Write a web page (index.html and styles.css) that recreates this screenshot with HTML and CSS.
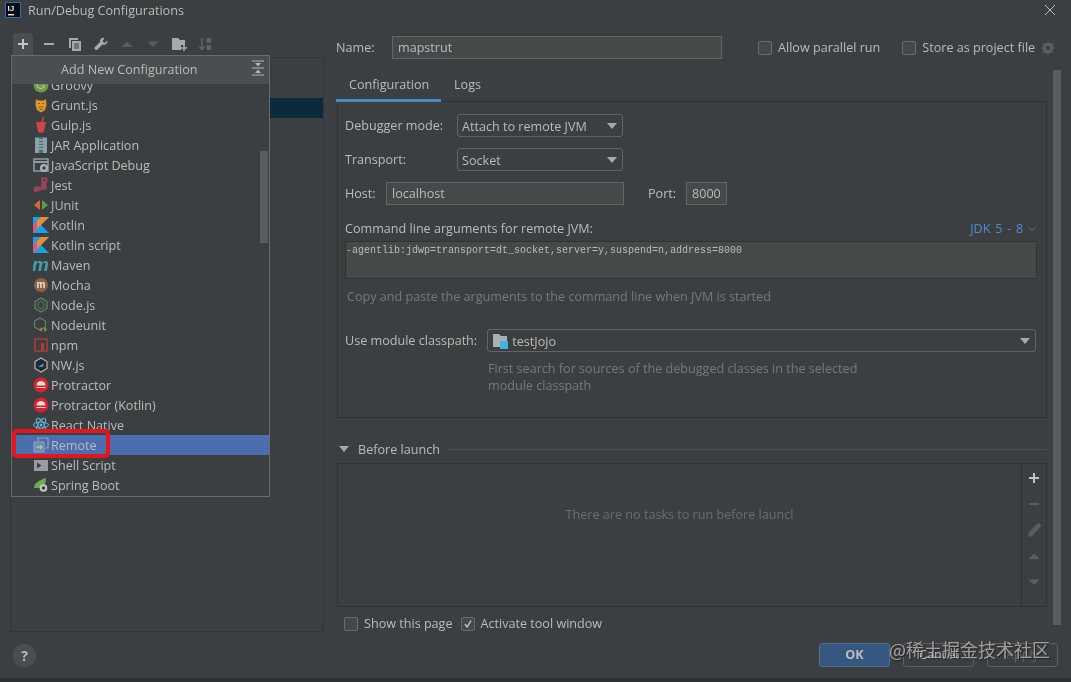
FILE: index.html
```html
<!DOCTYPE html>
<html lang="en">
<head>
    <meta charset="UTF-8">
    <title>Run/Debug Configurations</title>
    <link rel="stylesheet" href="styles.css">
</head>
<body>
<div class="dialog">
    <!-- title bar -->
    <div class="titlebar">
        <svg class="app_icon" viewBox="0 0 16 16"><rect x="0.5" y="0.5" width="15" height="15" fill="#0b0d12" stroke="#2f6fb0"/><text x="2.5" y="8.5" class="app_icon_text">IJ</text><rect x="3" y="12" width="6" height="1.4" fill="#e8e8e8"/></svg>
        <span class="title_text">Run/Debug Configurations</span>
        <svg class="close_icon" viewBox="0 0 10 10"><path d="M0 0L10 10M10 0L0 10" stroke="#bbb" fill="none"/></svg>
    </div>

    <div class="main">
        <!-- left side -->
        <div class="left">
            <div class="toolbar">
                <span class="tool tool_on"><svg viewBox="0 0 16 16"><path d="M8 3V13M3 8H13" stroke="#c4c4c4" stroke-width="2"/></svg></span>
                <span class="tool"><svg viewBox="0 0 16 16"><path d="M3 8H13" stroke="#a9a9a9" stroke-width="2"/></svg></span>
                <span class="tool"><svg viewBox="0 0 16 16"><path d="M2 2H11V4H4V12H2Z" fill="#a9a9a9"/><path d="M5 5H14V15H5Z" fill="#a9a9a9"/><path d="M7 8H12M7 10H12M7 12H12" stroke="#3c3f41"/></svg></span>
                <span class="tool"><svg viewBox="0 0 16 16"><path d="M14.5 4.5L11.5 7 9.5 5.5 11.5 2C9 1 6.5 3 7 6L1.5 11.5C1 13 2.5 14.5 4 14L9.500 8.500C12 9.500 15 7.500 14.500 4.500Z" fill="#a9a9a9"/></svg></span>
                <span class="tool"><svg viewBox="0 0 16 16"><path d="M2.500 11L8 5.500 13.500 11Z" fill="#5a5d5f"/></svg></span>
                <span class="tool"><svg viewBox="0 0 16 16"><path d="M2.500 5.500L8 11 13.500 5.500Z" fill="#5a5d5f"/></svg></span>
                <span class="tool"><svg viewBox="0 0 16 16"><path d="M1 2H7L9 4H14V9H10V14H1Z" fill="#a9a9a9"/><path d="M13 9V15M10 12H16" stroke="#a9a9a9" stroke-width="1.600"/></svg></span>
                <span class="tool"><svg viewBox="0 0 16 16"><path d="M5 2V13M2.500 10.500L5 13.500 7.500 10.500" stroke="#5f6264" stroke-width="1.500" fill="none"/><path d="M9.500 2H14V7H9.500ZM9.500 9H14V14H9.500Z" fill="#5f6264"/></svg></span>
            </div>
            <div class="tree_panel">
                <div class="tree_selected"></div>
            </div>

            <!-- add configuration popup -->
            <div class="popup">
                <div class="popup_head">
                    <span>Add New Configuration</span>
                    <svg class="collapse_icon" viewBox="0 0 12 16"><path d="M0 1H12M0 15H12M0 8H12" stroke="#b5b5b5"/><path d="M3 3H9L6 6.500ZM3 13H9L6 9.500Z" fill="#b5b5b5"/></svg>
                </div>
                <ul class="popup_list">
                    <li><svg viewBox="0 0 16 16"><circle cx="8" cy="8" r="7.500" fill="#6f9a45"/><path d="M11 5.500A3.800 3.800 0 1 0 11.500 9H8.500" fill="none" stroke="#a9c78c" stroke-width="1.200"/></svg>Groovy</li>
                    <li><svg viewBox="0 0 16 16"><path d="M3 2L5 3.500H11L13 2 13.500 8 12 13 8 15.500 4 13 2.500 8Z" fill="#dd9a2b"/><path d="M5 6.500H7M9 6.500H11M5.500 10H10.500M6.500 12.500H9.500" stroke="#8a5a1c" stroke-width="1.200"/></svg>Grunt.js</li>
                    <li><svg viewBox="0 0 16 16"><path d="M3 5H13L11.500 12 10.500 15.500H5.500L4.500 12Z" fill="#cf4646"/><path d="M9 5L10.500 0" stroke="#cf4646" stroke-width="1.500"/></svg>Gulp.js</li>
                    <li><svg viewBox="0 0 16 16"><rect x="2" y="0.500" width="12" height="15.500" fill="#8aa3ab"/><rect x="6" y="0.500" width="4" height="15.500" fill="#4d6e77"/><path d="M6 3H10M6 6H10M6 9H10M6 12H10" stroke="#b8cdd3"/></svg>JAR Application</li>
                    <li><svg viewBox="0 0 16 16"><path d="M1 2H15V14H1Z" fill="none" stroke="#8a9da5" stroke-width="1.500"/><path d="M1 5H15" stroke="#8a9da5" stroke-width="2"/><circle cx="11" cy="11" r="4" fill="#aab4b9"/><circle cx="11" cy="11" r="1.800" fill="#3c3f41"/></svg>JavaScript Debug</li>
                    <li><svg viewBox="0 0 16 16"><path d="M8 0.500H14.500V5.500L13 5.500 14 12 7 13.500 1 15.500 0.500 10.500 5 9 7.500 10.500 8.500 5.500Z" fill="#99425b"/><path d="M10.500 2H12.500V4H10.500Z" fill="#3c3f41"/></svg>Jest</li>
                    <li><svg viewBox="0 0 16 16"><path d="M7 3V13L1 8Z" fill="#d9682f"/><path d="M9 3V13L15 8Z" fill="#5f9e43"/></svg>JUnit</li>
                    <li><svg viewBox="0 0 16 16"><path d="M0 0H16L8 8 16 16H0Z" fill="#19a0e6"/><path d="M8 0H16L0 16V8Z" fill="#ef8a34"/><path d="M0 8L4 4V12L0 16Z" fill="#d4558f"/></svg>Kotlin</li>
                    <li><svg viewBox="0 0 16 16"><path d="M0 0H16L8 8 16 16H0Z" fill="#19a0e6"/><path d="M8 0H16L0 16V8Z" fill="#ef8a34"/><path d="M0 8L4 4V12L0 16Z" fill="#d4558f"/></svg>Kotlin script</li>
                    <li><svg viewBox="0 0 16 16"><text x="-1" y="14" class="maven_m">m</text></svg>Maven</li>
                    <li><svg viewBox="0 0 16 16"><circle cx="8" cy="8" r="7" fill="#8a6244"/><text x="8" y="11" class="mocha_m">m</text></svg>Mocha</li>
                    <li><svg viewBox="0 0 16 16"><path d="M8 1L14 4.500V11.500L8 15 2 11.500V4.500Z" fill="none" stroke="#5b8a5b" stroke-width="1.200"/><path d="M8 4L11 6V10L8 12 5 10V6Z" fill="none" stroke="#5b8a5b" stroke-width="0.800"/></svg>Node.js</li>
                    <li><svg viewBox="0 0 16 16"><path d="M7 1L12.500 4V10L7 13 1.500 10V4Z" fill="none" stroke="#5b8a5b" stroke-width="1.200"/><path d="M9 10V15L6 12.500Z" fill="#d9682f"/><path d="M11 10V15L14.500 12.500Z" fill="#5f9e43"/></svg>Nodeunit</li>
                    <li><svg viewBox="0 0 16 16"><path d="M2 2H14V14H2Z" fill="none" stroke="#b03a3a" stroke-width="1.600"/><path d="M8 6H11V14H8Z" fill="#b03a3a"/></svg>npm</li>
                    <li><svg viewBox="0 0 16 16"><path d="M8 1L14 4.500V11.500L8 15 2 11.500V4.500Z" fill="#23282c" stroke="#b5b8ba" stroke-width="1.200"/><path d="M5 10L11 6 10 10Z" fill="#4a8fd0"/></svg>NW.js</li>
                    <li><svg viewBox="0 0 16 16"><circle cx="8" cy="8" r="7.500" fill="#d3232f"/><path d="M3.500 8.500A4.500 4.500 0 0 1 12.500 8.500Z" fill="#f4d9da"/><path d="M3.500 10.500H12.500" stroke="#f4d9da"/></svg>Protractor</li>
                    <li><svg viewBox="0 0 16 16"><circle cx="8" cy="8" r="7.500" fill="#d3232f"/><path d="M3.500 8.500A4.500 4.500 0 0 1 12.500 8.500Z" fill="#f4d9da"/><path d="M3.500 10.500H12.500" stroke="#f4d9da"/></svg>Protractor (Kotlin)</li>
                    <li><svg viewBox="0 0 16 16"><g fill="none" stroke="#5fb4d6"><ellipse cx="8" cy="8" rx="7.500" ry="3"/><ellipse cx="8" cy="8" rx="7.500" ry="3" transform="rotate(60 8 8)"/><ellipse cx="8" cy="8" rx="7.500" ry="3" transform="rotate(120 8 8)"/></g><circle cx="8" cy="8" r="1.500" fill="#5fb4d6"/></svg>React Native</li>
                    <li class="active"><svg viewBox="0 0 16 16"><path d="M5 4V1H15V11H12" fill="none" stroke="#8fa6bd" stroke-width="1.200"/><path d="M1 5H11V15H1Z" fill="#6f8cae" stroke="#8fa6bd"/><path d="M3 10H9M7 8L9 10 7 12" stroke="#c6d2de" fill="none"/></svg>Remote</li>
                    <li><svg viewBox="0 0 16 16"><rect x="1" y="3" width="14" height="11" fill="#9a9d9f"/><path d="M4 5.500L8.500 8.500 4 11.500Z" fill="#3c3f41"/></svg>Shell Script</li>
                    <li><svg viewBox="0 0 16 16"><path d="M1 11C1 6 6 3 13 1 13 6 11 10 7 11Z" fill="#6cab4a"/><circle cx="10.500" cy="11" r="3.800" fill="#c8c8c8"/><circle cx="10.500" cy="11" r="1.800" fill="#3c3f41"/></svg>Spring Boot</li>
                </ul>
                <div class="popup_thumb"></div>
                <div class="red_box"></div>
            </div>
        </div>

        <!-- right side -->
        <div class="right">
            <div class="name_row">
                <label class="name_label">Name:</label>
                <div class="input name_input">mapstrut</div>
                <span class="check check_parallel"><i class="box"></i>Allow parallel run</span>
                <span class="check check_store"><i class="box"></i>Store as project file</span>
                <svg class="gear_icon" viewBox="0 0 16 16"><path d="M6.500 1H9.500L10 3 12 2 14 4 13 6 15 6.500V9.500L13 10 14 12 12 14 10 13 9.500 15H6.500L6 13 4 14 2 12 3 10 1 9.500V6.500L3 6 2 4 4 2 6 3Z" fill="#5a5d5f"/><circle cx="8" cy="8" r="2.200" fill="#3c3f41"/></svg>
            </div>

            <div class="scroll_row">
                <div class="content">
                    <div class="tabs">
                        <span class="tab tab_on">Configuration</span>
                        <span class="tab">Logs</span>
                    </div>
                    <div class="panel">
                        <div class="form_row">
                            <label class="form_label">Debugger mode:</label>
                            <div class="select select_short">Attach to remote JVM<i class="arrow"></i></div>
                        </div>
                        <div class="form_row">
                            <label class="form_label">Transport:</label>
                            <div class="select select_short">Socket<i class="arrow"></i></div>
                        </div>
                        <div class="form_row">
                            <label class="host_label">Host:</label>
                            <div class="input host_input">localhost</div>
                            <label class="port_label">Port:</label>
                            <div class="input port_input">8000</div>
                        </div>
                        <div class="cmd_head">
                            <span>Command line arguments for remote JVM:</span>
                            <span class="jdk">JDK 5 - 8 <svg viewBox="0 0 8 6"><path d="M0.500 1L4 4.500 7.500 1" fill="none" stroke="#777"/></svg></span>
                        </div>
                        <div class="cmd_box">-agentlib:jdwp=transport=dt_socket,server=y,suspend=n,address=8000</div>
                        <p class="hint hint_copy">Copy and paste the arguments to the command line when JVM is started</p>
                        <div class="module_row">
                            <label class="module_label">Use module classpath:</label>
                            <div class="select select_module">
                                <svg class="module_icon" viewBox="0 0 16 16"><path d="M0 1H6L8 3H14V14H0Z" fill="#a9b0b5"/><rect x="7" y="8" width="8" height="8" fill="#3fb4dc"/></svg>
                                testJojo<i class="arrow"></i>
                            </div>
                        </div>
                        <p class="hint hint_module">First search for sources of the debugged classes in the selected<br>module classpath</p>
                    </div>

                    <div class="before_head">
                        <i class="before_arrow"></i>
                        <span>Before launch</span>
                        <i class="before_line"></i>
                    </div>
                    <div class="before_box">
                        <div class="before_empty">There are no tasks to run before launcl</div>
                        <div class="before_tools">
                            <svg viewBox="0 0 16 16"><path d="M8 3V13M3 8H13" stroke="#c4c4c4" stroke-width="2"/></svg>
                            <svg viewBox="0 0 16 16"><path d="M3 8H13" stroke="#5a5d5f" stroke-width="2"/></svg>
                            <svg viewBox="0 0 16 16"><path d="M3 15L2 14 3 10 11 2 14 1 15 4 13.500 6 6 14Z" fill="#5a5d5f"/></svg>
                            <svg viewBox="0 0 16 16"><path d="M2.500 11L8 5.500 13.500 11Z" fill="#5a5d5f"/></svg>
                            <svg viewBox="0 0 16 16"><path d="M2.500 5.500L8 11 13.500 5.500Z" fill="#5a5d5f"/></svg>
                        </div>
                    </div>
                    <div class="launch_checks">
                        <span class="check"><i class="box"></i>Show this page</span>
                        <span class="check"><i class="box box_on"><svg viewBox="0 0 14 14"><path d="M3.500 7L6 10.500 10.500 3" fill="none" stroke="#c4c4c4" stroke-width="1.600"/></svg></i>Activate tool window</span>
                    </div>
                </div>
                <div class="scrollbar"></div>
            </div>
        </div>
    </div>

    <!-- bottom buttons -->
    <div class="footer">
        <span class="help">?</span>
        <div class="buttons">
            <span class="btn btn_ok">OK</span>
            <span class="btn">Cancel</span>
            <span class="btn btn_off">Apply</span>
        </div>
        <span class="watermark">@稀土掘金技术社区</span>
    </div>
</div>
</body>
</html>
```

FILE: styles.css
```css
*{
    margin: 0;
    padding: 0;
    box-sizing: border-box;
}
li{
    list-style: none;
}
i{
    font-style: normal;
}
body{
    width: 1071px;
    height: 682px;
    overflow: hidden;
    background: #2f3133;
    color: #bbbbbb;
    font-family: "Open Sans", "Noto Sans", sans-serif;
    font-size: 12.6px;
}
.dialog{
    width: 1071px;
    height: 678px;
    background: #3c3f41;
    position: relative;
    filter: blur(0.35px);
}

/* title bar */
.titlebar{
    height: 20px;
    display: flex;
    align-items: center;
    padding-left: 5px;
}
.app_icon{
    width: 16px;
    height: 16px;
    flex: none;
}
.app_icon_text{
    font-family: "Liberation Sans", sans-serif;
    font-size: 8px;
    font-weight: bold;
    fill: #e8e8e8;
}
.title_text{
    margin-left: 7px;
}
.close_icon{
    width: 10px;
    height: 10px;
    margin-left: auto;
    margin-right: 16px;
}

.main{
    height: 623px;
    display: flex;
}

/* left side */
.left{
    width: 314px;
    margin-left: 10px;
    position: relative;
    flex: none;
}
.toolbar{
    margin-top: 13px;
    height: 24px;
    padding-left: 3px;
    display: flex;
}
.tool{
    width: 20px;
    height: 22px;
    margin-right: 6px;
    display: flex;
    align-items: center;
    justify-content: center;
}
.tool svg{
    width: 16px;
    height: 16px;
}
.tool_on{
    background: #4b4e50;
    border-radius: 3px 3px 0 0;
}
.tree_panel{
    height: 575px;
    border: 1px solid #333537;
    padding-top: 40px;
}
.tree_selected{
    height: 20px;
    background: #0d293e;
}

/* popup */
.popup{
    position: absolute;
    left: 1px;
    top: 35px;
    width: 259px;
    height: 442px;
    background: #3c3f41;
    border: 1px solid #696c6e;
    overflow: hidden;
}
.popup_head{
    position: relative;
    z-index: 1;
    height: 28px;
    background: #4b4e50;
    display: flex;
    align-items: center;
    padding-left: 49px;
    padding-bottom: 2px;
}
.collapse_icon{
    position: absolute;
    right: 5px;
    top: 4px;
    width: 12px;
    height: 16px;
}
.popup_list{
    margin-top: -9px;
}
.popup_list li{
    height: 20px;
    display: flex;
    align-items: center;
    padding-left: 21px;
}
.popup_list li svg{
    width: 16px;
    height: 16px;
    margin-right: 2px;
    flex: none;
}
.popup_list li.active{
    background: #4b6eaf;
}
.maven_m{
    font-family: "Liberation Sans", sans-serif;
    font-size: 19px;
    font-weight: bold;
    font-style: italic;
    fill: #3f9fb0;
}
.mocha_m{
    font-family: "Liberation Sans", sans-serif;
    font-size: 10px;
    font-weight: bold;
    fill: #f0e6dc;
    text-anchor: middle;
}
.popup_thumb{
    position: absolute;
    left: 248px;
    top: 95px;
    width: 8px;
    height: 92px;
    background: #5a5d5f;
}
.red_box{
    position: absolute;
    left: 0;
    top: 373px;
    width: 98px;
    height: 29px;
    border: 4px solid #e5161b;
    border-radius: 5px;
}

/* right side */
.right{
    width: 725px;
    margin-left: 12px;
    padding-top: 16px;
    flex: none;
}
.name_row{
    height: 23px;
    display: flex;
    align-items: center;
}
.name_label{
    width: 56px;
}
.input{
    height: 23px;
    line-height: 21px;
    background: #45494a;
    border: 1px solid #646464;
    padding-left: 5px;
    color: #bbbbbb;
}
.name_input{
    width: 330px;
}
.check{
    display: flex;
    align-items: center;
}
.box{
    width: 14px;
    height: 14px;
    margin-right: 6px;
    border: 1px solid #6b6b6b;
    border-radius: 2px;
    background: #43494a;
    flex: none;
}
.box svg{
    display: block;
    width: 12px;
    height: 12px;
}
.check_parallel{
    margin-left: 36px;
}
.check_store{
    margin-left: 22px;
}
.gear_icon{
    width: 14px;
    height: 14px;
    margin-left: 6px;
}

.scroll_row{
    margin-top: 11px;
    height: 555px;
    display: flex;
}
.content{
    width: 711px;
    flex: none;
}
.scrollbar{
    width: 8px;
    margin-left: 6px;
    background: #5a5d5f;
}

.tabs{
    height: 32px;
    display: flex;
    border-bottom: 1px solid #323232;
}
.tab{
    height: 32px;
    line-height: 29px;
    padding: 0 13px;
}
.tab_on{
    width: 105px;
    border-bottom: 3px solid #4a88c7;
}
.panel{
    height: 316px;
    margin-left: 1px;
    padding: 12px 9px 0 7px;
    border: 1px solid #323232;
    border-top: 0;
}
.form_row{
    display: flex;
    align-items: center;
    height: 23px;
    margin-bottom: 11px;
}
.form_label{
    width: 112px;
}
.select{
    height: 23px;
    line-height: 24px;
    border: 1px solid #646464;
    border-radius: 3px;
    padding-left: 4px;
    position: relative;
    background: #3c3f41;
}
.select_short{
    width: 166px;
}
.arrow{
    position: absolute;
    right: 5px;
    top: 8px;
    border-left: 5px solid transparent;
    border-right: 5px solid transparent;
    border-top: 6px solid #a9a9a9;
}
.host_label{
    width: 41px;
}
.host_input{
    width: 238px;
}
.port_label{
    margin-left: 24px;
    width: 38px;
}
.port_input{
    width: 41px;
}
.cmd_head{
    display: flex;
    justify-content: space-between;
    padding-right: 1px;
    margin-top: 15px;
    height: 17px;
    line-height: 17px;
}
.jdk{
    color: #4f8ad0;
    word-spacing: 1.5px;
}
.jdk svg{
    width: 8px;
    height: 6px;
    vertical-align: 1px;
}
.cmd_box{
    margin-top: 4px;
    height: 38px;
    padding-top: 2px;
    background: #45494a;
    border: 1px solid #323232;
    font-family: "Liberation Mono", monospace;
    font-size: 10px;
    line-height: 13px;
}
.hint{
    color: #787878;
    line-height: 17px;
}
.hint_copy{
    margin-top: 9px;
    padding-left: 2px;
}
.module_row{
    margin-top: 24px;
    display: flex;
    align-items: center;
}
.module_label{
    width: 142px;
}
.select_module{
    width: 549px;
    padding-left: 5px;
}
.module_icon{
    width: 16px;
    height: 16px;
    vertical-align: -3px;
}
.hint_module{
    margin-top: 8px;
    margin-left: 143px;
}

.before_head{
    margin-top: 23px;
    height: 16px;
    display: flex;
    align-items: center;
}
.before_arrow{
    margin-left: 3px;
    margin-right: 9px;
    border-left: 5px solid transparent;
    border-right: 5px solid transparent;
    border-top: 6px solid #a9a9a9;
}
.before_line{
    flex: 1;
    height: 1px;
    margin-left: 7px;
    background: #4d5052;
}
.before_box{
    margin-top: 6px;
    margin-left: 1px;
    height: 144px;
    display: flex;
    border: 1px solid #323232;
}
.before_empty{
    flex: 1;
    color: #6b6e70;
    text-align: center;
    padding-top: 42px;
    line-height: 17px;
}
.before_tools{
    width: 25px;
    border-left: 1px solid #323232;
    padding: 6px 0 0 4px;
    display: flex;
    flex-direction: column;
    gap: 10px;
}
.before_tools svg{
    width: 16px;
    height: 16px;
}
.launch_checks{
    margin-top: 8px;
    padding-left: 8px;
    display: flex;
    gap: 8px;
}

/* bottom buttons */
.footer{
    height: 24px;
    display: flex;
    align-items: center;
    padding: 0 13px;
}
.help{
    width: 23px;
    height: 23px;
    line-height: 23px;
    border-radius: 50%;
    background: #4b4e50;
    font-weight: bold;
    font-size: 14px;
    text-align: center;
}
.buttons{
    margin-left: auto;
    display: flex;
    gap: 13px;
}
.btn{
    width: 71px;
    height: 24px;
    line-height: 22px;
    text-align: center;
    border: 1px solid #5e6163;
    border-radius: 3px;
    background: #3c3f41;
}
.btn_ok{
    background: #365880;
    border-color: #4c708c;
    font-weight: bold;
    color: #bbbbbb;
}
.btn_off{
    color: #666666;
}
.watermark{
    position: absolute;
    left: 889px;
    top: 636px;
    font-family: "Noto Sans CJK SC", sans-serif;
    font-size: 18px;
    line-height: 26px;
    color: rgba(205, 205, 205, 0.7);
    text-shadow: 1px 1px 1px #222;
}
```
